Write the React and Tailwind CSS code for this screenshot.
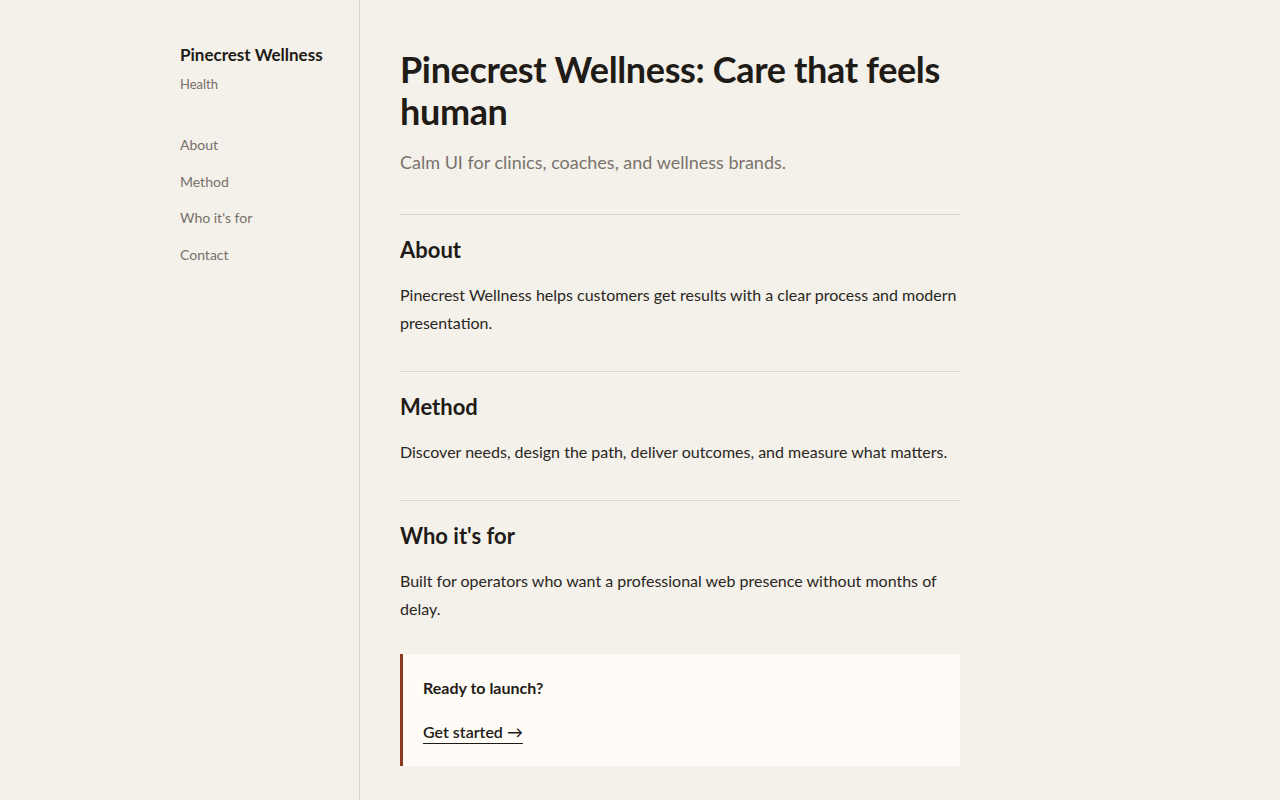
export default function App() {
  const nav = ['About', 'Method', "Who it's for", 'Contact'];
  const sections = [
    {
      title: 'About',
      body: 'Pinecrest Wellness helps customers get results with a clear process and modern presentation.',
    },
    {
      title: 'Method',
      body: 'Discover needs, design the path, deliver outcomes, and measure what matters.',
    },
    {
      title: "Who it's for",
      body: 'Built for operators who want a professional web presence without months of delay.',
    },
  ];

  return (
    <div className="min-h-screen flex bg-[#f4f1eb] text-[#1f1b17] font-['Lato','Noto_Sans',sans-serif]">
      <aside className="w-[360px] shrink-0 border-r border-[#d8d3cb] pl-[180px] pr-6 pt-[42px]">
        <div className="text-[17px] leading-[26px] font-bold">Pinecrest Wellness</div>
        <div className="mt-[6px] text-[13px] leading-5 text-[#77706a]">Health</div>
        <nav className="mt-[33px] flex flex-col">
          {nav.map((n) => (
            <a key={n} href="#" className="text-sm leading-5 py-[8.3px] text-[#77706a]">
              {n}
            </a>
          ))}
        </nav>
      </aside>

      <main className="pl-10 pt-12 pb-8">
        <div className="max-w-[560px]">
          <h1 className="text-[36px] leading-[42px] font-bold tracking-[-0.01em]">
            Pinecrest Wellness: Care that feels human
          </h1>
          <p className="mt-[17px] text-lg leading-[27px] text-[#7a736c]">
            Calm UI for clinics, coaches, and wellness brands.
          </p>

          <div className="mt-[38px]">
            {sections.map((s) => (
              <section key={s.title} className="border-t border-[#d9d4cc] pt-[21px] pb-[34px]">
                <h2 className="text-[22px] leading-7 font-bold">{s.title}</h2>
                <p className="mt-[17px] text-base leading-7 text-[#2a2622]">{s.body}</p>
              </section>
            ))}
          </div>

          <div className="-mt-[3px] bg-[#fffcf7] border-l-[3px] border-[#8b3b20] pl-5 pr-6 py-[22px]">
            <p className="text-base leading-6 font-bold">Ready to launch?</p>
            <a href="#" className="inline-block mt-5 text-base leading-6 font-semibold underline underline-offset-[5px]">
              Get started →
            </a>
          </div>
        </div>
      </main>
    </div>
  );
}
